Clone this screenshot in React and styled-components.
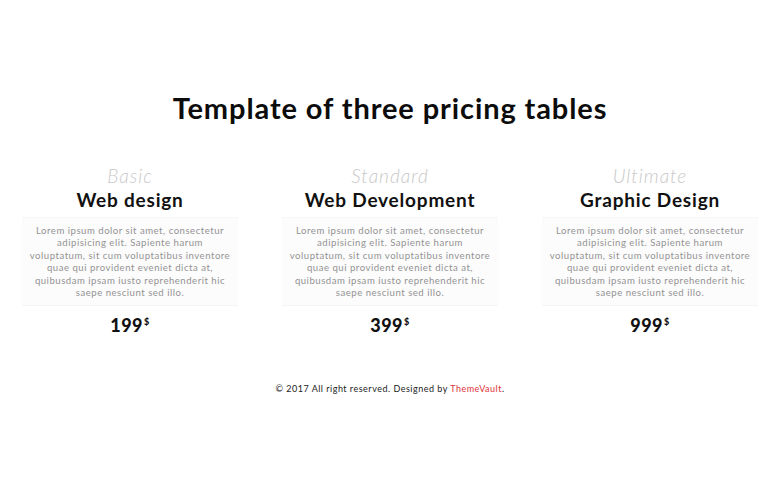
import React from "react";
import styled, { createGlobalStyle } from "styled-components";

const GlobalStyle = createGlobalStyle`
  * { box-sizing: border-box; }
  body {
    margin: 0;
    background: #fff;
    font-family: "Lato", "Noto Sans", sans-serif;
    color: #111;
  }
`;

const plans = [
  { id: 1, tier: "Basic", name: "Web design", price: 199 },
  { id: 2, tier: "Standard", name: "Web Development", price: 399 },
  { id: 3, tier: "Ultimate", name: "Graphic Design", price: 999 },
];

// same text in every card, broken where the original breaks it
const loremLines = [
  "Lorem ipsum dolor sit amet, consectetur",
  "adipisicing elit. Sapiente harum",
  "voluptatum, sit cum voluptatibus inventore",
  "quae qui provident eveniet dicta at,",
  "quibusdam ipsam iusto reprehenderit hic",
  "saepe nesciunt sed illo.",
];

const App = () => {
  return (
    <Wrapper>
      <GlobalStyle />
      <Title>Template of three pricing tables</Title>
      <Grid>
        {plans.map((plan) => (
          <Card key={plan.id}>
            <Tier>{plan.tier}</Tier>
            <Name>{plan.name}</Name>
            <Desc>
              {loremLines.map((line) => (
                <span key={line}>{line} </span>
              ))}
            </Desc>
            <Price>
              {plan.price}
              <sup>$</sup>
            </Price>
          </Card>
        ))}
      </Grid>
      <Footer>
        © 2017 All right reserved. Designed by <a href="#">ThemeVault</a>.
      </Footer>
    </Wrapper>
  );
};

const Wrapper = styled.div`
  width: 780px;
  padding-top: 90px;
`;

const Title = styled.h1`
  margin: 0;
  text-align: center;
  font-size: 29px;
  font-weight: 700;
  letter-spacing: 0.9px;
  line-height: 36px;
  color: #0c0c0c;
`;

const Grid = styled.div`
  display: grid;
  grid-template-columns: repeat(3, 1fr);
  margin-top: 39px;
`;

const Card = styled.div`
  display: flex;
  flex-direction: column;
  align-items: center;
  padding: 0 22px;
`;

const Tier = styled.div`
  font-size: 19px;
  font-style: italic;
  font-weight: 300;
  letter-spacing: 1px;
  color: #c8c8c8;
  line-height: 22px;
`;

const Name = styled.h3`
  margin: 0;
  font-size: 19px;
  font-weight: 700;
  letter-spacing: 0.8px;
  line-height: 26px;
  color: #111;
`;

const Desc = styled.p`
  margin: 4px 0 0;
  width: 100%;
  padding: 7px 4px 6px;
  background: #fcfcfc;
  border-top: 1px solid #f6f6f6;
  border-bottom: 1px solid #f4f4f4;
  text-align: center;
  font-size: 9.6px;
  letter-spacing: 0.5px;
  line-height: 12.4px;
  color: #939393;
  white-space: nowrap;

  span {
    display: block;
  }
`;

const Price = styled.div`
  margin-top: 8px;
  font-size: 18px;
  font-weight: 900;
  letter-spacing: 0.5px;
  color: #111;

  sup {
    font-size: 9px;
    margin-left: 1px;
    vertical-align: 7px;
  }
`;

const Footer = styled.footer`
  margin-top: 47px;
  text-align: center;
  font-size: 9px;
  letter-spacing: 0.5px;
  color: #222;

  a {
    color: #e0323a;
    text-decoration: none;
  }
`;

export default App;
